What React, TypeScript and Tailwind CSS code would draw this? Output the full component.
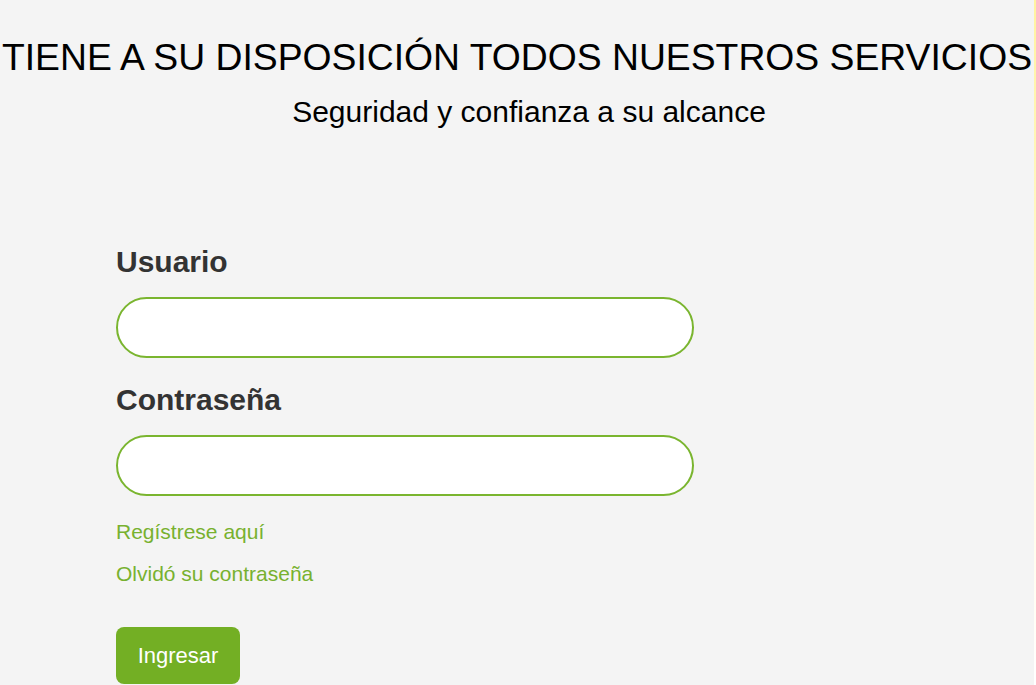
import React from "react";

export default function App() {
  return (
    <div className="flex h-[685px] w-[1036px] overflow-hidden" style={{ fontFamily: '"Liberation Sans", Arial, sans-serif' }}>
      <div className="flex w-[1034px] flex-col bg-[#f4f4f4]">
        <h1 className="mt-[36px] text-center text-[37.3px] leading-[42px] text-black whitespace-nowrap">
          TIENE A SU DISPOSICIÓN TODOS NUESTROS SERVICIOS
        </h1>
        <p className="mt-[17px] pl-[24px] text-center text-[30px] leading-[34px] text-black">
          Seguridad y confianza a su alcance
        </p>
        <div className="ml-[116px] mt-[116px] flex w-[578px] flex-col">
          <label className="text-[30px] font-bold leading-[34px] text-[#333333]">Usuario</label>
          <input className="mt-[18px] h-[61px] w-full rounded-full border-2 border-[#7ab52f] bg-white px-6 outline-none" />
          <label className="mt-[25px] text-[30px] font-bold leading-[34px] text-[#333333]">Contraseña</label>
          <input type="password" className="mt-[18px] h-[61px] w-full rounded-full border-2 border-[#7ab52f] bg-white px-6 outline-none" />
          <a className="mt-[22px] text-[21px] leading-[28px] text-[#78b12f]">Regístrese aquí</a>
          <a className="mt-[14px] text-[21px] leading-[28px] text-[#78b12f]">Olvidó su contraseña</a>
          <div className="mt-[39px]">
            <button className="h-[57px] w-[124px] rounded-[8px] bg-[#73af24] text-[22px] text-white">Ingresar</button>
          </div>
        </div>
      </div>
      <div className="w-[2px] bg-gradient-to-b from-[#fff3a0] to-white" />
    </div>
  );
}
